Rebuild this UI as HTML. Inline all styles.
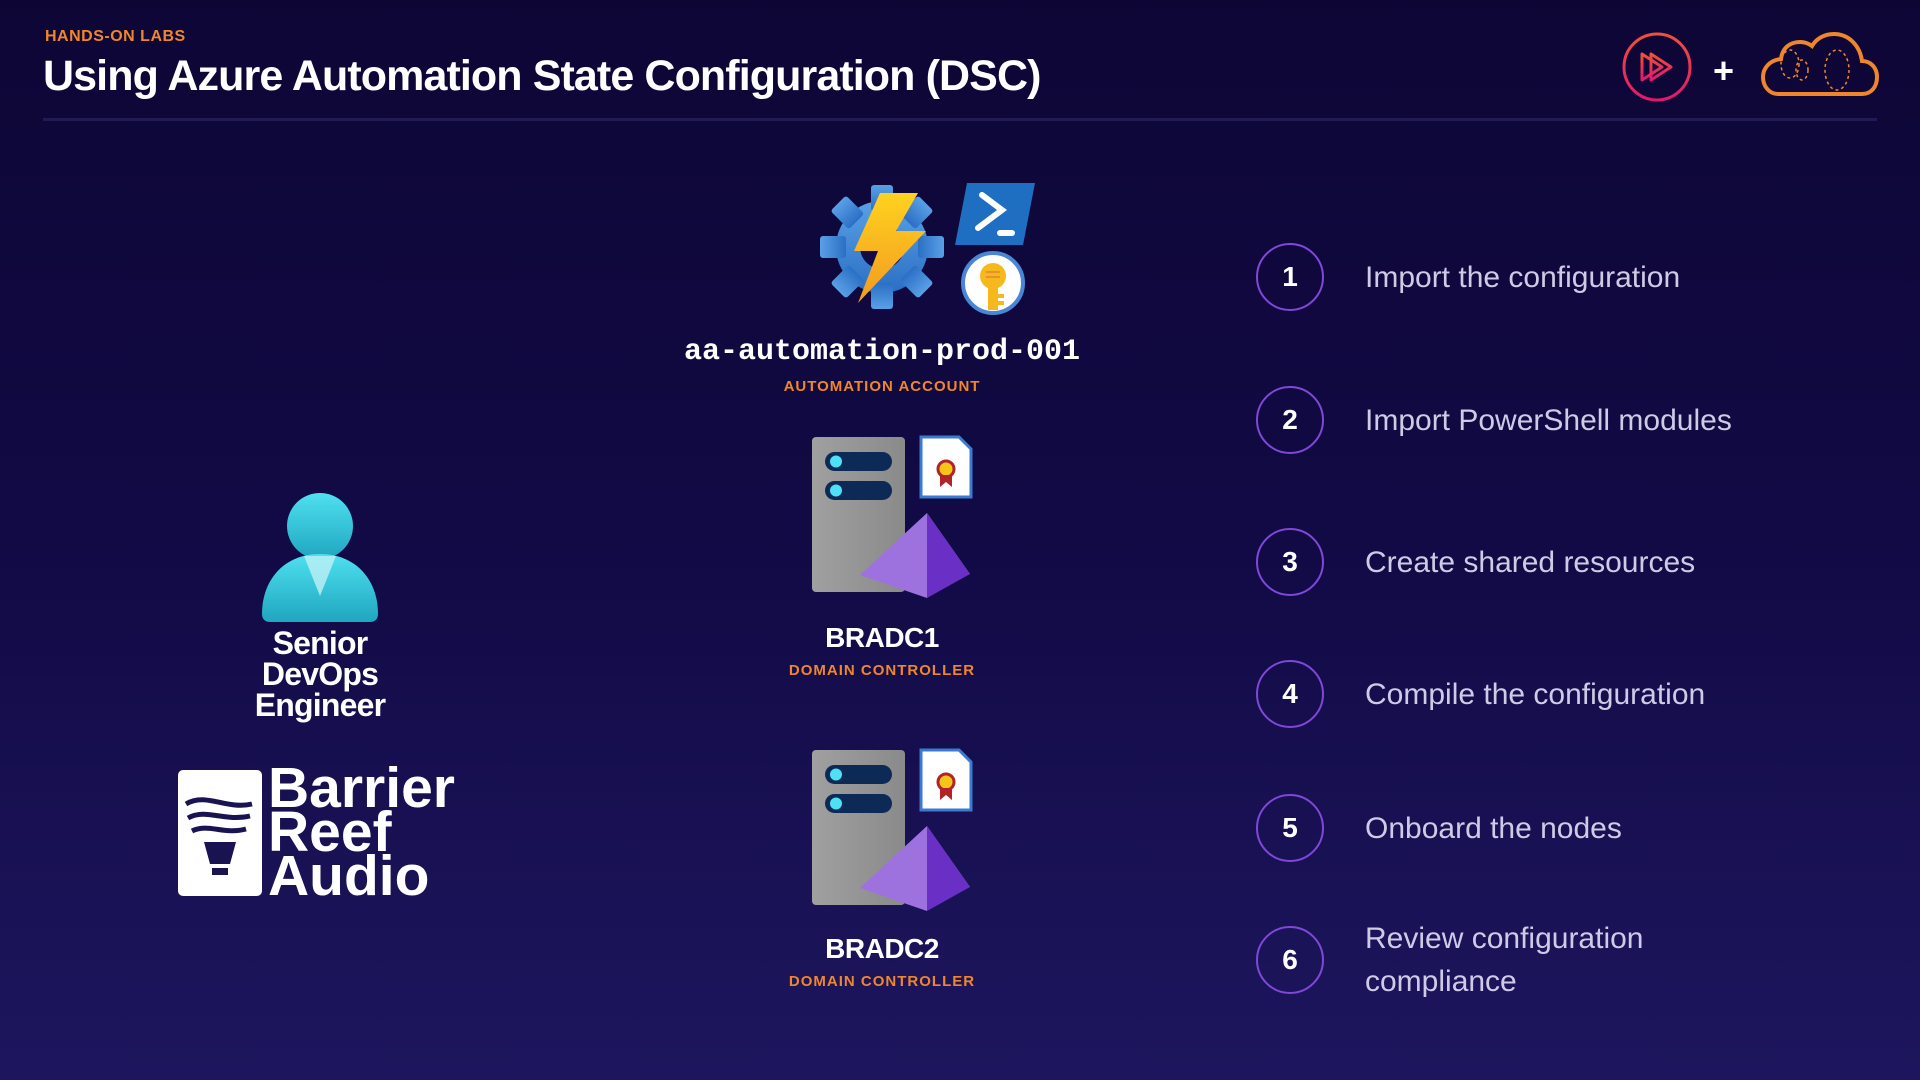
<!DOCTYPE html>
<html><head><meta charset="utf-8"><style>
body{margin:0;width:1920px;height:1080px;overflow:hidden;background:linear-gradient(180deg,#0d0635 0%,#120a45 50%,#1d165e 100%);font-family:"Liberation Sans",sans-serif;position:relative}
.a{position:absolute}
.or{color:#f0862c;font-weight:bold;letter-spacing:1px}
.c{text-align:center}
.num{position:absolute;left:1256px;width:64px;height:64px;border:2.5px solid #7f48d8;border-radius:50%;color:#fff;font-weight:bold;font-size:28px;line-height:64px;text-align:center}
.st{position:absolute;left:1365px;color:#cfcbe6;font-size:30px}
</style></head><body>
<div class="a or" style="left:45px;top:28px;font-size:16px;letter-spacing:0.5px">HANDS-ON LABS</div>
<div class="a" style="left:43px;top:52px;font-size:43px;font-weight:bold;color:#fff;letter-spacing:-0.9px">Using Azure Automation State Configuration (DSC)</div>
<div class="a" style="left:43px;top:118px;width:1834px;height:3px;background:#211a55"></div>
<svg class="a" style="left:1620px;top:30px" width="80" height="80" viewBox="0 0 80 80"><defs><linearGradient id="pg" x1="0" y1="0" x2="0" y2="1"><stop offset="0" stop-color="#f2503a"/><stop offset="1" stop-color="#e0186e"/></linearGradient></defs><circle cx="37" cy="37" r="33" fill="none" stroke="url(#pg)" stroke-width="3"/><path d="M22 24v26l20-13z M31 24v26l20-13z" fill="none" stroke="url(#pg)" stroke-width="3" stroke-linejoin="round"/></svg>
<div class="a" style="left:1713px;top:50px;color:#fff;font-size:36px;font-weight:bold">+</div>
<svg class="a" style="left:1760px;top:30px" width="120" height="70" viewBox="0 0 120 70"><path d="M18 64h84c10 0 15-8 15-17s-6-16-15-16c-2-15-13-27-28-27-10 0-18 5-22 12-4-3-8-4-12-4-11 0-18 7-19 17C10 30 3 38 3 47s6 17 15 17z" fill="none" stroke="#f0862c" stroke-width="4"/><g fill="none" stroke="#f0862c" stroke-width="1.5" stroke-dasharray="3 3"><ellipse cx="30" cy="34" rx="9" ry="14"/><ellipse cx="42" cy="40" rx="6" ry="10"/><ellipse cx="77" cy="40" rx="12" ry="20"/></g></svg>

<svg class="a" style="left:818px;top:181px" width="130" height="130" viewBox="0 0 130 130"><defs><linearGradient id="gg" x1="0" y1="0" x2="0" y2="1"><stop offset="0" stop-color="#5aa0e6"/><stop offset="1" stop-color="#2a6fc4"/></linearGradient><linearGradient id="bl" x1="0" y1="0" x2="0" y2="1"><stop offset="0" stop-color="#ffd21f"/><stop offset="1" stop-color="#f39a20"/></linearGradient></defs>
<g transform="translate(64,66)" fill="url(#gg)"><circle r="46"/><g id="t"><rect x="-11" y="-62" width="22" height="26" rx="3"/></g><use href="#t" transform="rotate(45)"/><use href="#t" transform="rotate(90)"/><use href="#t" transform="rotate(135)"/><use href="#t" transform="rotate(180)"/><use href="#t" transform="rotate(225)"/><use href="#t" transform="rotate(270)"/><use href="#t" transform="rotate(315)"/><circle r="22" fill="#130b44"/></g>
<path d="M62 12h38L78 50h30L40 122l20-52H36z" fill="url(#bl)"/></svg>
<svg class="a" style="left:955px;top:181px" width="82" height="66" viewBox="0 0 82 66"><path d="M12 2h68l-12 62H0z" fill="#1e6fc2"/><path d="M27 14l20 15-24 18" fill="none" stroke="#fff" stroke-width="6" stroke-linecap="round"/><path d="M45 52h12" stroke="#fff" stroke-width="6" stroke-linecap="round"/></svg>
<svg class="a" style="left:960px;top:250px" width="66" height="66" viewBox="0 0 66 66"><circle cx="33" cy="33" r="30" fill="#fff" stroke="#4a86d6" stroke-width="4"/><circle cx="33" cy="26" r="13" fill="#f6b81c"/><rect x="28" y="30" width="10" height="30" fill="#f6b81c"/><rect x="38" y="44" width="6" height="4" fill="#f6b81c"/><rect x="38" y="51" width="6" height="4" fill="#f6b81c"/><path d="M26 22h14M26 27h14" stroke="#e5932a" stroke-width="2"/></svg>
<div class="a c" style="left:582px;width:600px;top:335px;font-family:'Liberation Mono',monospace;font-weight:bold;font-size:30px;color:#fff">aa-automation-prod-001</div>
<div class="a c or" style="left:582px;width:600px;top:378px;font-size:15px">AUTOMATION ACCOUNT</div>

<svg class="a" style="left:810px;top:435px" width="170" height="165" viewBox="0 0 170 165"><defs><linearGradient id="sg" x1="0" y1="0" x2="1" y2="0"><stop offset="0" stop-color="#a0a0a0"/><stop offset="1" stop-color="#8a8a8a"/></linearGradient></defs><rect x="2" y="2" width="93" height="155" rx="4" fill="url(#sg)"/><rect x="15" y="17" width="67" height="19" rx="9.5" fill="#0c2a55"/><rect x="15" y="46" width="67" height="19" rx="9.5" fill="#0c2a55"/><circle cx="26" cy="26.5" r="6" fill="#4ee0f5"/><circle cx="26" cy="55.5" r="6" fill="#4ee0f5"/><path d="M111 2h38l12 12v48h-50z" fill="#fff" stroke="#3a7ad0" stroke-width="3"/><circle cx="136" cy="34" r="8" fill="#f5c518" stroke="#b2222a" stroke-width="3"/><path d="M130 40v12l6-5 6 5V40" fill="#b2222a"/><path d="M115 147l45-8-43-61z" fill="#a67be0"/><path d="M117 78l43 61-43 24z" fill="#6a2fc4"/><path d="M50 140l67-62v85z" fill="#9d72df"/></svg>
<div class="a c" style="left:732px;width:300px;top:622px;font-size:28px;font-weight:bold;color:#fff;letter-spacing:-0.5px">BRADC1</div>
<div class="a c or" style="left:732px;width:300px;top:662px;font-size:15px">DOMAIN CONTROLLER</div>
<svg class="a" style="left:810px;top:748px" width="170" height="165" viewBox="0 0 170 165"><rect x="2" y="2" width="93" height="155" rx="4" fill="url(#sg)"/><rect x="15" y="17" width="67" height="19" rx="9.5" fill="#0c2a55"/><rect x="15" y="46" width="67" height="19" rx="9.5" fill="#0c2a55"/><circle cx="26" cy="26.5" r="6" fill="#4ee0f5"/><circle cx="26" cy="55.5" r="6" fill="#4ee0f5"/><path d="M111 2h38l12 12v48h-50z" fill="#fff" stroke="#3a7ad0" stroke-width="3"/><circle cx="136" cy="34" r="8" fill="#f5c518" stroke="#b2222a" stroke-width="3"/><path d="M130 40v12l6-5 6 5V40" fill="#b2222a"/><path d="M115 147l45-8-43-61z" fill="#a67be0"/><path d="M117 78l43 61-43 24z" fill="#6a2fc4"/><path d="M50 140l67-62v85z" fill="#9d72df"/></svg>
<div class="a c" style="left:732px;width:300px;top:933px;font-size:28px;font-weight:bold;color:#fff;letter-spacing:-0.5px">BRADC2</div>
<div class="a c or" style="left:732px;width:300px;top:973px;font-size:15px">DOMAIN CONTROLLER</div>

<svg class="a" style="left:260px;top:492px" width="120" height="132" viewBox="0 0 120 132"><defs><linearGradient id="pp" x1="0" y1="0" x2="0" y2="1"><stop offset="0" stop-color="#4fe0f0"/><stop offset="1" stop-color="#1fa6c0"/></linearGradient></defs><circle cx="60" cy="34" r="33" fill="url(#pp)"/><path d="M2 122c0-34 22-60 58-60s58 26 58 60c0 5-3 8-8 8H10c-5 0-8-3-8-8z" fill="url(#pp)"/><path d="M44 64h32L60 104z" fill="#bff0f6" opacity="0.8"/></svg>
<div class="a c" style="left:200px;width:240px;top:628px;font-size:32px;font-weight:bold;color:#fff;line-height:31px;letter-spacing:-0.8px">Senior<br>DevOps<br>Engineer</div>

<div class="a" style="left:178px;top:770px;width:84px;height:126px;background:#fff;border-radius:5px"></div>
<svg class="a" style="left:178px;top:770px" width="84" height="126" viewBox="0 0 84 126"><g fill="none" stroke="#1a1352" stroke-width="5"><path d="M8 34c20-12 40 6 66 0"/><path d="M10 48c18-10 36 4 62-2"/><path d="M14 61c16-8 32 4 54-2"/></g><path d="M26 72h32l-6 22H32z" fill="#1a1352"/><rect x="34" y="98" width="16" height="7" fill="#1a1352"/></svg>
<div class="a" style="left:268px;top:766px;font-size:57px;font-weight:bold;color:#fff;line-height:44px;letter-spacing:0px">Barrier<br>Reef<br>Audio</div>

<div class="num" style="top:243px">1</div><div class="st" style="top:261px">Import the configuration</div>
<div class="num" style="top:386px">2</div><div class="st" style="top:404px">Import PowerShell modules</div>
<div class="num" style="top:528px">3</div><div class="st" style="top:546px">Create shared resources</div>
<div class="num" style="top:660px">4</div><div class="st" style="top:678px">Compile the configuration</div>
<div class="num" style="top:794px">5</div><div class="st" style="top:812px">Onboard the nodes</div>
<div class="num" style="top:926px">6</div><div class="st" style="top:917px;line-height:43px">Review configuration<br>compliance</div>
</body></html>
